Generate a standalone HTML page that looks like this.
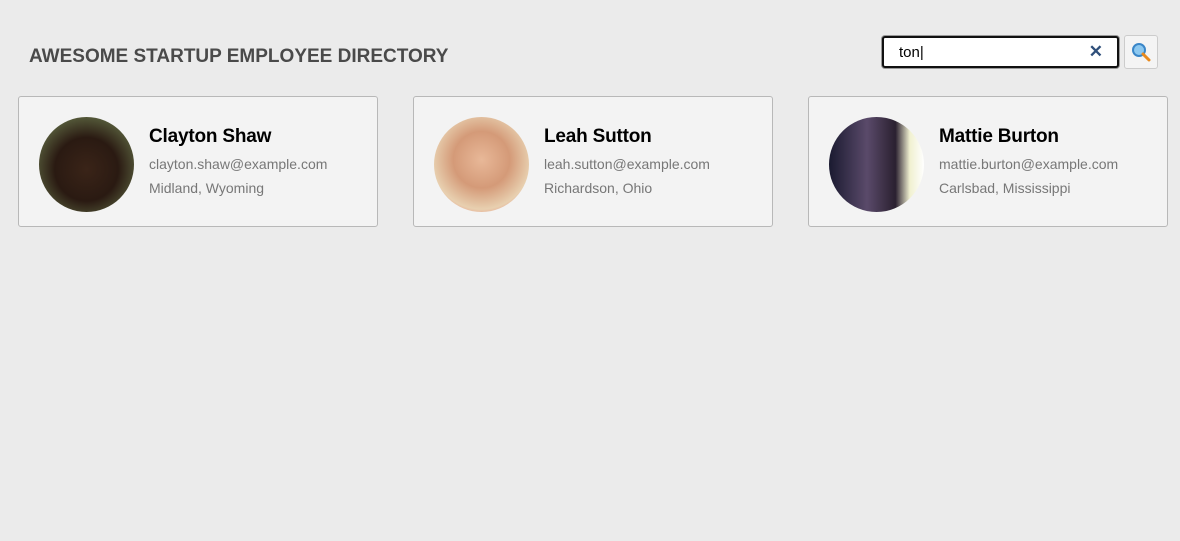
<!DOCTYPE html>
<html><head><style>
body{margin:0;background:#ebebeb;font-family:"Liberation Sans",sans-serif;width:1180px;height:541px;overflow:hidden;position:relative}
h1{position:absolute;left:29px;top:46px;margin:0;font-size:19px;font-weight:bold;color:#4a4a4a;letter-spacing:0}
.search{position:absolute;left:882px;top:36px;width:233px;height:28px;border:2px solid #111;border-radius:3px;background:#fff;box-shadow:0 0 0 1px #999}
.search span{position:absolute;left:15px;top:6px;font-size:15px;color:#000}
.search .x{left:auto;right:14px;top:4px;font-size:17px;font-weight:bold;color:#2f4f7a}
.btn{position:absolute;left:1124px;top:35px;width:32px;height:32px;border:1px solid #ccc;border-radius:3px;background:#f4f4f4}
.card{position:absolute;top:96px;width:358px;height:129px;border:1px solid #b8b8b8;border-radius:3px;background:#f3f3f3}
.av{position:absolute;left:20px;top:20px;width:95px;height:95px;border-radius:50%}
.n{position:absolute;left:130px;top:29px;font-size:19px;font-weight:bold;color:#000;letter-spacing:-0.2px}
.e{position:absolute;left:130px;top:59px;font-size:14px;color:#777}
.l{position:absolute;left:130px;top:83px;font-size:14px;color:#777}
</style></head><body>
<h1>AWESOME STARTUP EMPLOYEE DIRECTORY</h1>
<div class="search"><span>ton|</span><span class="x">✕</span></div>
<div class="btn"><svg width="32" height="32"><circle cx="14" cy="14" r="6" fill="#8cc8f0" stroke="#3a86c8" stroke-width="2"/><line x1="18" y1="18" x2="24" y2="24" stroke="#e98a1d" stroke-width="3" stroke-linecap="round"/></svg></div>
<div class="card" style="left:18px"><div class="av" style="background:radial-gradient(circle at 50% 55%,#3a2418 0,#2a1a12 45%,#555a3a 75%,#222 100%)"></div><div class="n">Clayton Shaw</div><div class="e">clayton.shaw@example.com</div><div class="l">Midland, Wyoming</div></div>
<div class="card" style="left:413px"><div class="av" style="background:radial-gradient(circle at 50% 45%,#e8b898 0,#d49a78 40%,#e8d0b0 70%,#e85050 100%)"></div><div class="n">Leah Sutton</div><div class="e">leah.sutton@example.com</div><div class="l">Richardson, Ohio</div></div>
<div class="card" style="left:808px"><div class="av" style="background:linear-gradient(90deg,#1a1a30 0,#5a4a6a 40%,#2a2030 70%,#f0f0d0 85%,#fff 100%)"></div><div class="n">Mattie Burton</div><div class="e">mattie.burton@example.com</div><div class="l">Carlsbad, Mississippi</div></div>
</body></html>
